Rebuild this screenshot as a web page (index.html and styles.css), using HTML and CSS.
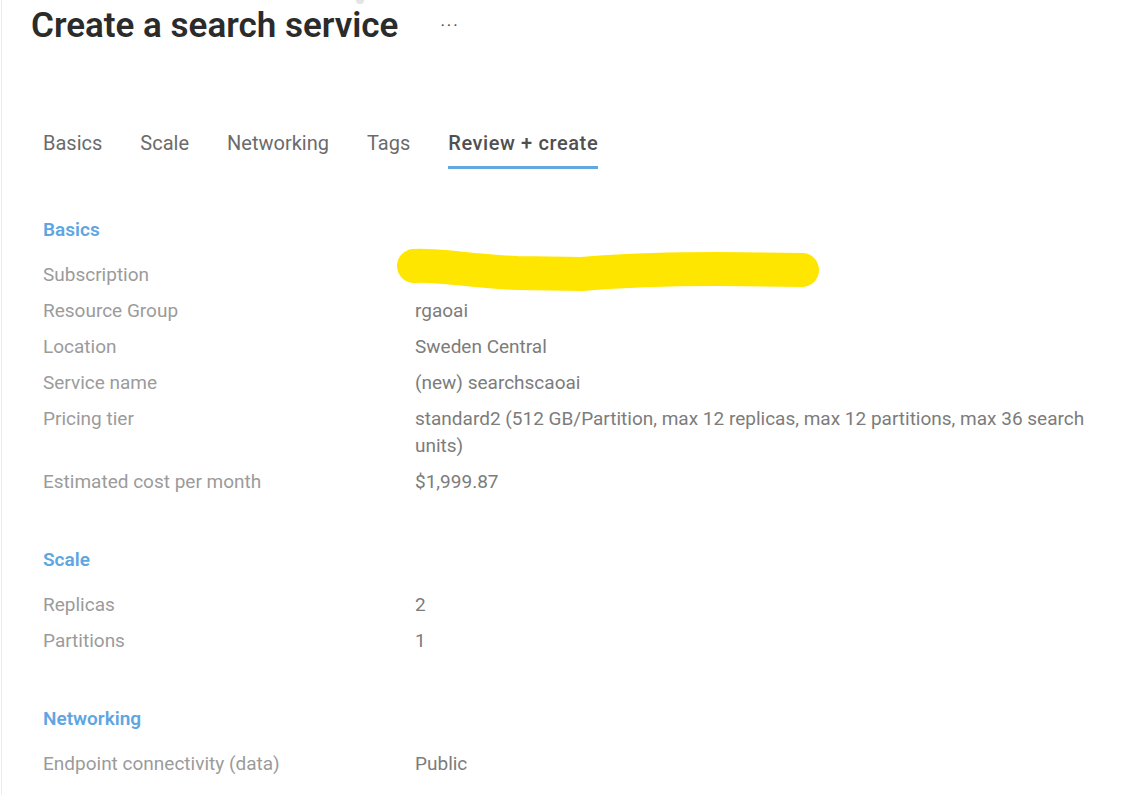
FILE: index.html
```html
<!DOCTYPE html>
<html lang="en">
<head>
<meta charset="utf-8">
<title>Create a search service</title>
<link rel="stylesheet" href="styles.css">
</head>
<body>
<div class="page">
  <span class="dot"></span>
  <header class="title-row">
    <h1 class="title">Create a search service</h1>
    <span class="more">&middot;&middot;&middot;</span>
  </header>

  <nav class="tabs">
    <span class="tab">Basics</span>
    <span class="tab">Scale</span>
    <span class="tab">Networking</span>
    <span class="tab">Tags</span>
    <span class="tab active">Review + create</span>
  </nav>

  <section class="section">
    <h2 class="section-title">Basics</h2>
    <div class="grid">
      <div class="label">Subscription</div>
      <div class="value redacted">
        <svg class="scribble" width="440" height="60" viewBox="0 0 440 60" aria-hidden="true">
          <path d="M 17 22 C 40 20, 70 27, 120 29 L 185 30 C 220 27, 260 25, 320 25 L 405 26" fill="none" stroke="#ffe600" stroke-width="34" stroke-linecap="round" stroke-linejoin="round"/>
        </svg>
      </div>
      <div class="label">Resource Group</div>
      <div class="value">rgaoai</div>
      <div class="label">Location</div>
      <div class="value">Sweden Central</div>
      <div class="label">Service name</div>
      <div class="value">(new) searchscaoai</div>
      <div class="label">Pricing tier</div>
      <div class="value">standard2 (512 GB/Partition, max 12 replicas, max 12 partitions, max 36 search units)</div>
      <div class="label">Estimated cost per month</div>
      <div class="value">$1,999.87</div>
    </div>
  </section>

  <section class="section">
    <h2 class="section-title">Scale</h2>
    <div class="grid">
      <div class="label">Replicas</div>
      <div class="value">2</div>
      <div class="label">Partitions</div>
      <div class="value">1</div>
    </div>
  </section>

  <section class="section">
    <h2 class="section-title">Networking</h2>
    <div class="grid">
      <div class="label">Endpoint connectivity (data)</div>
      <div class="value">Public</div>
    </div>
  </section>
</div>
</body>
</html>
```

FILE: styles.css
```css
* { box-sizing: border-box; }

html, body {
  margin: 0;
  padding: 0;
  background: #ffffff;
}

body {
  font-family: "Segoe UI", Roboto, "Noto Sans", sans-serif;
  color: #323130;
  overflow: hidden;
}

.page {
  position: relative;
  height: 795px;
  margin-left: 1px;
  border-left: 1px solid #ececec;
  padding-left: 41px;
}

.dot {
  position: absolute;
  left: 354px;
  top: -4px;
  width: 8px;
  height: 8px;
  border-radius: 50%;
  background: #e4e4e4;
}

.title-row {
  display: flex;
  align-items: center;
  height: 50px;
  margin-left: -12px;
}

.title {
  margin: 0;
  font-size: 35px;
  font-weight: 600;
  color: #2b2b2b;
  line-height: 1;
}

.more {
  margin-left: 42px;
  font-size: 17px;
  color: #444;
  letter-spacing: 2px;
}

.tabs {
  display: flex;
  gap: 38px;
  margin-top: 76px;
  height: 42px;
  align-items: flex-start;
}

.tab {
  font-size: 20px;
  line-height: 34px;
  color: #6b6b6b;
  padding-bottom: 6px;
}

.tab.active {
  color: #505050;
  font-weight: 500;
  letter-spacing: 0.6px;
  border-bottom: 3px solid #62a9e2;
}

.section {
  margin-top: 48px;
}

.section + .section {
  margin-top: 51px;
}

.section-title {
  margin: 0 0 17px;
  font-size: 19px;
  line-height: 28px;
  font-weight: 600;
  color: #5ea6e2;
}

.grid {
  display: grid;
  grid-template-columns: 372px 1fr;
  row-gap: 9px;
  padding-right: 30px;
}

.label {
  font-size: 19px;
  line-height: 27px;
  color: #9b9b9b;
}

.value {
  font-size: 19px;
  line-height: 27px;
  color: #7c7c7c;
}

.redacted {
  position: relative;
  min-height: 27px;
}

.scribble {
  position: absolute;
  left: -18px;
  top: -17px;
}
```
